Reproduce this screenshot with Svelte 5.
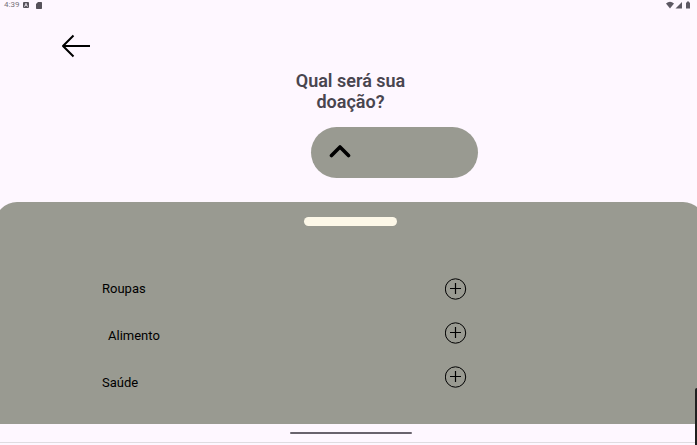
<script>
  let open = $state(true);
  const categories = [
    { id: 'roupas', label: 'Roupas' },
    { id: 'alimento', label: 'Alimento', indented: true },
    { id: 'saude', label: 'Saúde' }
  ];
</script>

<div class="screen">
  <div class="status">
    <span class="time">4:39</span>
    <svg class="app" width="6" height="6" viewBox="0 0 6 6" aria-hidden="true">
      <rect width="6" height="6" rx="1" fill="#56525a" />
      <path d="M1.5 4.8 3 1.2 4.5 4.8M2.2 3.5h1.6" fill="none" stroke="#eee7f0" stroke-width=".8" />
    </svg>
    <svg class="card" width="6" height="7" viewBox="0 0 6 7" aria-hidden="true">
      <path d="M2 0h3.3q.7 0 .7.7v5.6q0 .7-.7.7H.7Q0 7 0 6.300V2z" fill="#56525a" />
    </svg>
    <svg class="signals" width="26" height="8" viewBox="0 0 26 8" aria-hidden="true">
      <path d="M0 2.600Q4-1 8 2.600L4 7.500z" fill="#5d5963" />
      <path d="M9.500 7.500 16 1v6.500z" fill="#5d5963" />
      <path d="M20 1.500h1V.5h2v1h1v6h-4z" fill="#5d5963" />
    </svg>
  </div>

  <header>
    <button class="back" aria-label="Voltar">
      <svg width="30" height="24" viewBox="0 0 30 24" fill="none" stroke="#000" stroke-width="2" aria-hidden="true">
        <path d="M12.500 1.500 2 12l10.500 10.500M2 12h27" stroke-linejoin="round" />
      </svg>
    </button>
  </header>

  <h1>Qual será sua doação?</h1>

  <button class="picker" aria-label="Escolher doação" aria-expanded={open} onclick={() => (open = !open)}>
    <svg width="22" height="14" viewBox="0 0 22 14" fill="none" stroke="#000" stroke-width="3.600" stroke-linecap="round" stroke-linejoin="round" aria-hidden="true">
      <path d="M2.500 11.500 11 3l8.500 8.500" />
    </svg>
  </button>

  <main class="sheet">
    <div class="handle"></div>
    <div class="list">
      <div class="names">
        {#each categories as item}
          <label for={item.id} class:indented={item.indented}>{item.label}</label>
        {/each}
      </div>
      <div class="actions">
        {#each categories as item}
          <button id={item.id} aria-label={'Adicionar ' + item.label}>
            <svg width="22" height="22" viewBox="0 0 22 22" fill="none" stroke="#000" aria-hidden="true">
              <circle cx="10.500" cy="11" r="10.200" />
              <path d="M5 10.500h11M10.500 5v11" stroke-width="1.200" />
            </svg>
          </button>
        {/each}
      </div>
    </div>
  </main>

  <footer><div class="home"></div></footer>
  <div class="edge"></div>
</div>

<style>
  :global(body) {
    background: #fef7ff;
  }
  .screen {
    position: relative;
    display: flex;
    flex-direction: column;
    min-height: 100vh;
    overflow: hidden;
    background: #fef7ff;
    font-family: Roboto, sans-serif;
  }
  button {
    display: flex;
    padding: 0;
    border: 0;
    background: none;
    cursor: pointer;
  }
  svg {
    display: block;
  }
  .status {
    display: flex;
    align-items: center;
    height: 10px;
    padding: 0 5px 0 4px;
  }
  .time {
    font-size: 8px;
    line-height: 10px;
    color: #77727b;
  }
  .app {
    margin-left: 4px;
  }
  .card {
    margin-left: 7px;
  }
  .signals {
    margin-left: auto;
  }
  header {
    padding: 24px 61px 0;
  }
  h1 {
    width: 140px;
    margin: 12px auto 0;
    padding-left: 4px;
    font-size: 18px;
    font-weight: 600;
    line-height: 21px;
    text-align: center;
    color: #49454f;
  }
  .picker {
    align-items: center;
    width: 24%;
    height: 51px;
    margin: 15px 0 0 44.6%;
    padding: 0 18px 4px;
    border-radius: 26px;
    background: #999a91;
  }
  .sheet {
    flex: 1;
    margin: 24px -8px 0 -5px;
    border-radius: 22px 22px 0 0;
    background: #999a91;
  }
  .handle {
    width: 93px;
    height: 9px;
    margin: 15px auto 0;
    border-radius: 5px;
    background: #fdf8e8;
  }
  .list {
    display: flex;
    justify-content: space-between;
    padding: 52px 238px 0 107px;
  }
  .names {
    display: flex;
    flex-direction: column;
    gap: 27px;
    padding-top: 1px;
  }
  label {
    font-size: 13px;
    line-height: 20px;
    color: #000;
  }
  .indented {
    padding-left: 6px;
  }
  .actions {
    display: flex;
    flex-direction: column;
    gap: 22px;
  }
  footer {
    height: 19px;
    padding: 8px 0 0 4px;
    box-sizing: border-box;
    border-bottom: 1px solid #dfdce1;
    margin-bottom: 2px;
  }
  .home {
    width: 122px;
    height: 2px;
    margin: 0 auto;
    border-radius: 1px;
    background: #69636d;
  }
  .edge {
    position: absolute;
    right: 0;
    bottom: 0;
    width: 2px;
    height: 57px;
    border-top-left-radius: 2px;
    background: #202020;
  }
</style>
